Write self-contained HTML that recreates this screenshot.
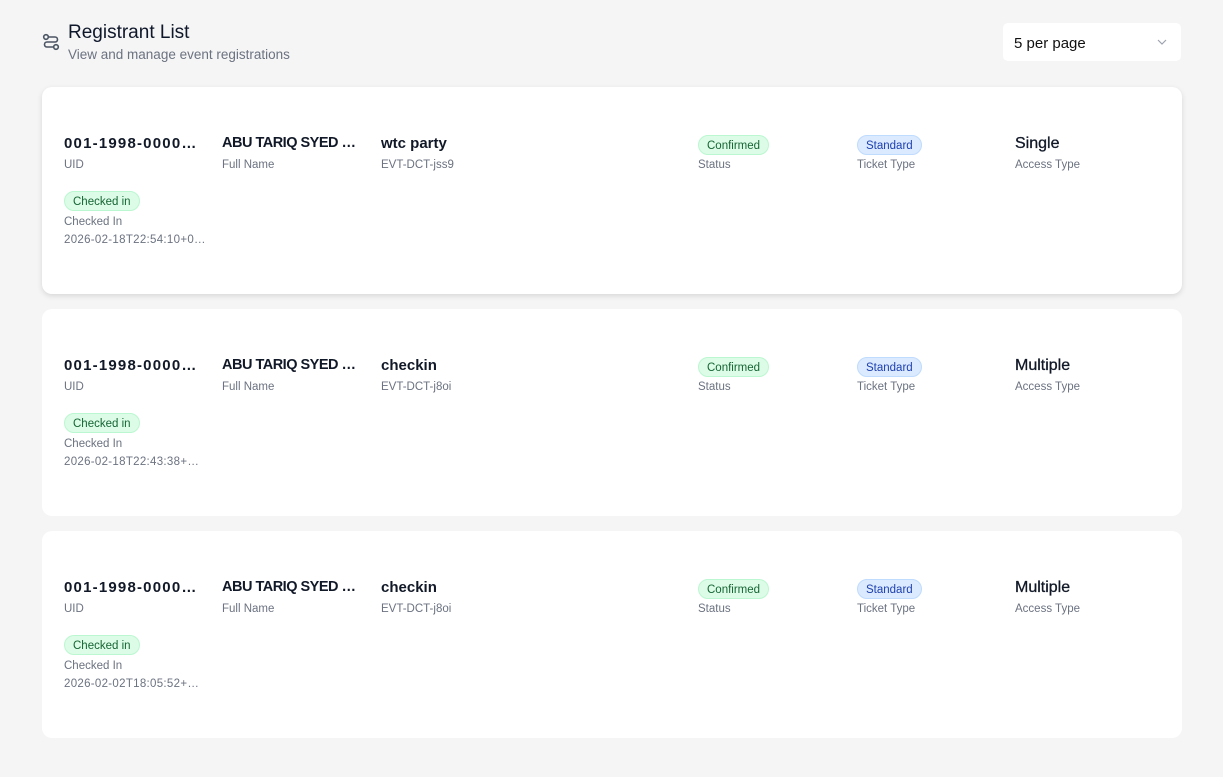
<!DOCTYPE html>
<html><head><style>
*{box-sizing:border-box;margin:0;padding:0}
body{width:1223px;height:777px;background:#f5f5f5;font-family:"Liberation Sans",sans-serif;position:relative;overflow:hidden;color:#111827}
.title{position:absolute;left:68px;top:22px;font-size:19px;font-weight:500;color:#0f172a}
.sub{position:absolute;left:68px;top:47px;font-size:13.5px;color:#6b7280}
.icon{position:absolute;left:42px;top:33px}
.sel{position:absolute;left:1003px;top:23px;width:178px;height:38px;background:#fff;border-radius:5px;font-size:15px;padding:12px 11px;color:#111}
.sel svg{position:absolute;right:14px;top:16px}
.card{position:absolute;left:42px;width:1140px;height:207px;background:#fff;border-radius:10px}
.card.s{box-shadow:0 2px 6px rgba(0,0,0,.12)}
.c{position:absolute;top:48px}
.v{font-size:15px;font-weight:bold;color:#111827;white-space:nowrap;height:20px}
.v.u{letter-spacing:1.2px}
.v.m{letter-spacing:-0.5px;font-size:14.5px}
.v.n{font-weight:normal;font-size:16px;-webkit-text-stroke:0.3px #111827}
.l{font-size:11.5px;color:#6b7280;margin-top:4px}
.b{display:inline-block;font-size:11.5px;padding:2px 8px;border-radius:10px;height:20px;line-height:16px;margin-top:0px}
.g{background:#dcfce7;color:#166534;border:1px solid #bbf7d0}
.bl{background:#dbeafe;color:#1e40af;border:1px solid #bfdbfe}
.ci{position:absolute;left:22px;top:104px}
.ci .l{margin-top:5px}
.t{font-size:11.5px;color:#6b7280;margin-top:6px;letter-spacing:0.3px}
</style></head><body>
<svg class="icon" width="18" height="18" viewBox="0 0 18 18" fill="none" stroke="#4b5563" stroke-width="1.6"><circle cx="4" cy="4" r="2.3"/><circle cx="14" cy="14" r="2.3"/><path d="M6.3 4H13a2.5 2.5 0 0 1 0 5H5a2.5 2.5 0 0 0 0 5h6.7"/></svg>
<div class="title">Registrant List</div>
<div class="sub">View and manage event registrations</div>
<div class="sel">5 per page<svg width="10" height="6" viewBox="0 0 10 6" fill="none" stroke="#9ca3af" stroke-width="1.2"><path d="M1 1l4 4 4-4"/></svg></div>

<div class="card s" style="top:87px">
<div class="c" style="left:22px"><div class="v u">001-1998-0000…</div><div class="l">UID</div></div>
<div class="c" style="left:180px"><div class="v m">ABU TARIQ SYED …</div><div class="l">Full Name</div></div>
<div class="c" style="left:339px"><div class="v">wtc party</div><div class="l">EVT-DCT-jss9</div></div>
<div class="c" style="left:656px"><span class="b g">Confirmed</span><div class="l">Status</div></div>
<div class="c" style="left:815px"><span class="b bl">Standard</span><div class="l">Ticket Type</div></div>
<div class="c" style="left:973px"><div class="v n">Single</div><div class="l">Access Type</div></div>
<div class="ci"><span class="b g">Checked in</span><div class="l">Checked In</div><div class="t">2026-02-18T22:54:10+0…</div></div>
</div>

<div class="card" style="top:309px">
<div class="c" style="left:22px"><div class="v u">001-1998-0000…</div><div class="l">UID</div></div>
<div class="c" style="left:180px"><div class="v m">ABU TARIQ SYED …</div><div class="l">Full Name</div></div>
<div class="c" style="left:339px"><div class="v">checkin</div><div class="l">EVT-DCT-j8oi</div></div>
<div class="c" style="left:656px"><span class="b g">Confirmed</span><div class="l">Status</div></div>
<div class="c" style="left:815px"><span class="b bl">Standard</span><div class="l">Ticket Type</div></div>
<div class="c" style="left:973px"><div class="v n">Multiple</div><div class="l">Access Type</div></div>
<div class="ci"><span class="b g">Checked in</span><div class="l">Checked In</div><div class="t">2026-02-18T22:43:38+…</div></div>
</div>

<div class="card" style="top:531px">
<div class="c" style="left:22px"><div class="v u">001-1998-0000…</div><div class="l">UID</div></div>
<div class="c" style="left:180px"><div class="v m">ABU TARIQ SYED …</div><div class="l">Full Name</div></div>
<div class="c" style="left:339px"><div class="v">checkin</div><div class="l">EVT-DCT-j8oi</div></div>
<div class="c" style="left:656px"><span class="b g">Confirmed</span><div class="l">Status</div></div>
<div class="c" style="left:815px"><span class="b bl">Standard</span><div class="l">Ticket Type</div></div>
<div class="c" style="left:973px"><div class="v n">Multiple</div><div class="l">Access Type</div></div>
<div class="ci"><span class="b g">Checked in</span><div class="l">Checked In</div><div class="t">2026-02-02T18:05:52+…</div></div>
</div>
</body></html>
